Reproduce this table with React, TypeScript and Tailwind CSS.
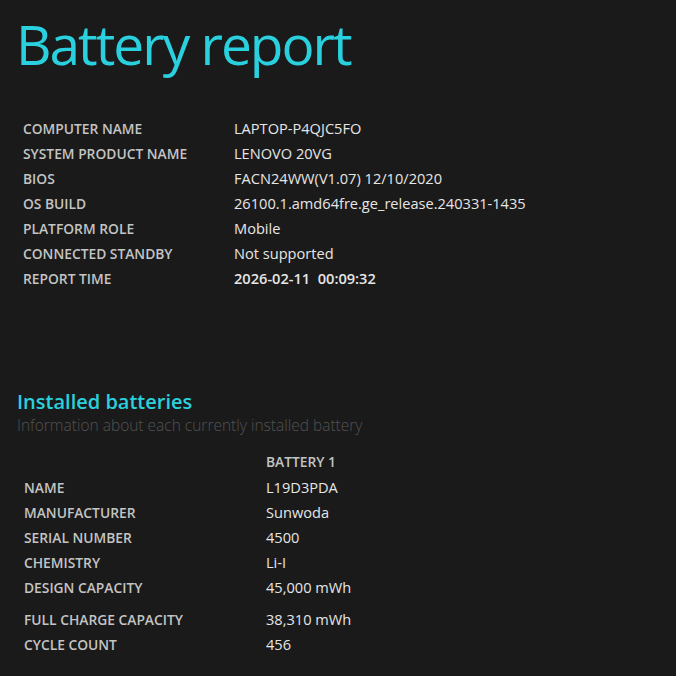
const systemInfo: [string, string][] = [
  ['COMPUTER NAME', 'LAPTOP-P4QJC5FO'],
  ['SYSTEM PRODUCT NAME', 'LENOVO 20VG'],
  ['BIOS', 'FACN24WW(V1.07) 12/10/2020'],
  ['OS BUILD', '26100.1.amd64fre.ge_release.240331-1435'],
  ['PLATFORM ROLE', 'Mobile'],
  ['CONNECTED STANDBY', 'Not supported'],
];

const batteryInfo: [string, string][] = [
  ['NAME', 'L19D3PDA'],
  ['MANUFACTURER', 'Sunwoda'],
  ['SERIAL NUMBER', '4500'],
  ['CHEMISTRY', 'Li-I'],
  ['DESIGN CAPACITY', '45,000 mWh'],
];

const capacityInfo: [string, string][] = [
  ['FULL CHARGE CAPACITY', '38,310 mWh'],
  ['CYCLE COUNT', '456'],
];

function Row({ label, value, labelWidth, bold }: { label: string; value: string; labelWidth: string; bold?: boolean }) {
  return (
    <div className="flex h-[25px] items-baseline pt-[2px]">
      <div className={`${labelWidth} shrink-0 text-[13.8px] font-semibold text-[#c4c4c4]`}>{label}</div>
      <div className={`whitespace-pre text-[14.6px] text-[#e6e6e6] ${bold ? 'font-semibold' : ''}`}>{value}</div>
    </div>
  );
}

export default function App() {
  return (
    <div
      className="h-[676px] w-[676px] overflow-hidden bg-[#1a1a1a]"
      style={{ fontFamily: '"Open Sans", "Noto Sans", sans-serif' }}
    >
      {/* Title */}
      <h1 className="pl-[16px] pt-[8px] text-[55px] font-normal leading-[72px] tracking-[-2px] text-[#2ad0de]">
        Battery report
      </h1>

      {/* System info */}
      <div className="mt-[36px] pl-[23px]">
        {systemInfo.map(([label, value]) => (
          <Row key={label} label={label} value={value} labelWidth="w-[211px]" />
        ))}
        <Row label="REPORT TIME" value="2026-02-11  00:09:32" labelWidth="w-[211px]" bold />
      </div>

      {/* Installed batteries */}
      <div className="mt-[98px] pl-[17px]">
        <h2 className="text-[20px] font-semibold leading-[26px] text-[#2ad0de]">Installed batteries</h2>
        <p className="text-[15.5px] font-light leading-[20px] text-[#525252]">
          Information about each currently installed battery
        </p>
      </div>

      <div className="mt-[15px] pl-[24px]">
        <div className="flex h-[25px] items-baseline pt-[2px]">
          <div className="w-[242px] shrink-0" />
          <div className="text-[13.8px] font-semibold text-[#c4c4c4]">BATTERY 1</div>
        </div>
        {batteryInfo.map(([label, value]) => (
          <Row key={label} label={label} value={value} labelWidth="w-[242px]" />
        ))}
        <div className="mt-[7px]">
          {capacityInfo.map(([label, value]) => (
            <Row key={label} label={label} value={value} labelWidth="w-[242px]" />
          ))}
        </div>
      </div>
    </div>
  );
}
